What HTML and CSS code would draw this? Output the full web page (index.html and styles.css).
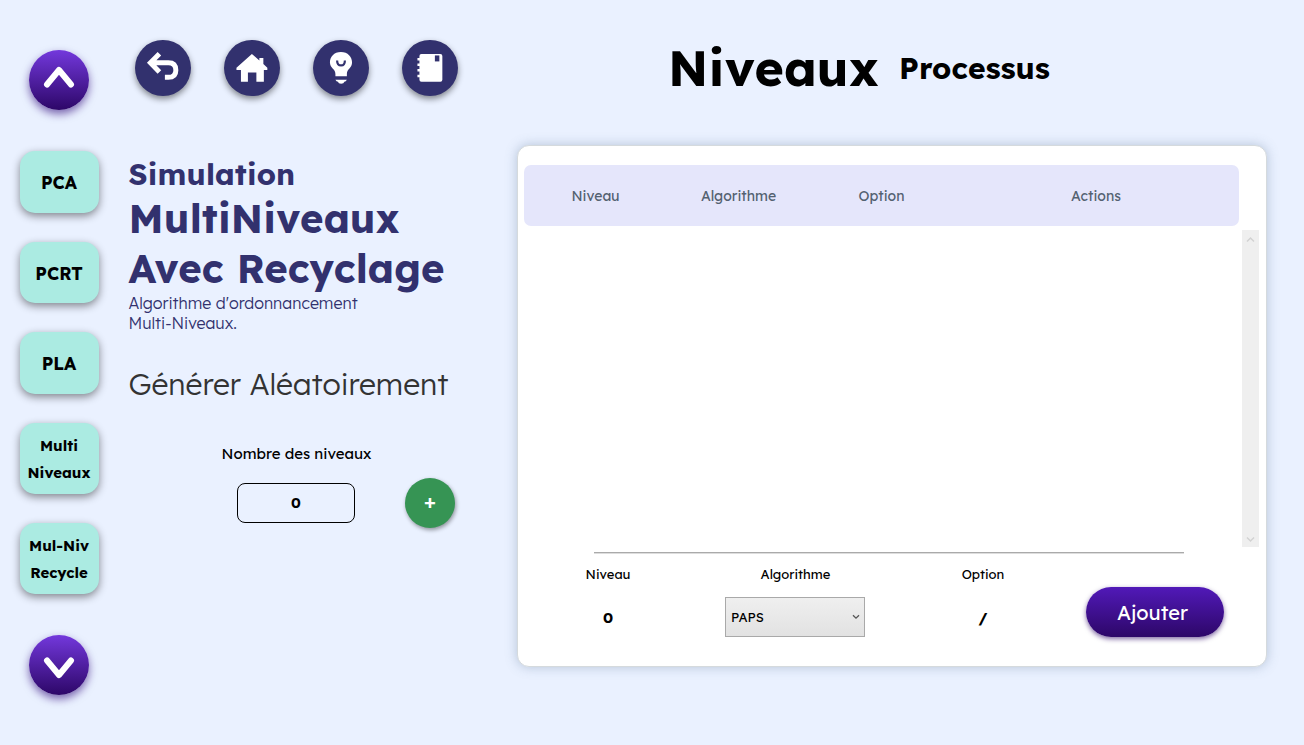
FILE: index.html
```html
<!DOCTYPE html>
<html lang="fr">
<head>
<meta charset="utf-8">
<title>Simulation MultiNiveaux</title>
<link rel="stylesheet" href="styles.css">
</head>
<body>
<div class="app">
  <nav class="sidebar">
    <button class="arrow"><svg viewBox="0 0 60 60"><path d="M18 34.500L30 20L42 34.500"/></svg></button>
    <div class="links">
      <a class="link">PCA</a>
      <a class="link">PCRT</a>
      <a class="link">PLA</a>
      <a class="link tall"><span>Multi</span><span>Niveaux</span></a>
      <a class="link tall"><span>Mul-Niv</span><span>Recycle</span></a>
    </div>
    <button class="arrow"><svg viewBox="0 0 60 60"><path d="M18 25.500L30 40L42 25.500"/></svg></button>
  </nav>

  <section class="intro">
    <div class="tools">
      <button class="tool"><svg viewBox="0 0 56 56"><path class="line" d="M24.500 13.800L15.500 22.800L24.500 32M15.500 22.800H33.500Q41 22.800 41 30.300Q41 37.500 33.500 37.500H30"/></svg></button>
      <button class="tool"><svg viewBox="0 0 56 56"><path d="M28 14L35.500 20.700V18H39.500V24.200L43.500 27.800V30H40V42H32.500V32.500H24V42H17V30H12.500V27.800Z"/></svg></button>
      <button class="tool"><svg viewBox="0 0 56 56"><path d="M28 12C21 12 17 17 17 22.500C17 28 22.500 29 22.500 34V36.500H34V34C34 29 39.200 28 39.200 22.500C39.200 17 35 12 28 12ZM22.500 40H34Q33 42 31.500 42Q31 44 28.200 44Q25.500 44 25 42Q23.500 42 22.500 40Z"/><path class="smile" d="M24.200 20.500Q24.200 25.500 28.200 25.500Q32 25.500 32 20.500"/></svg></button>
      <button class="tool"><svg viewBox="0 0 56 56"><path d="M19.500 14H38.500Q40.500 14 40.500 16V40Q40.500 42 38.500 42H19.500Q17.500 42 17.500 40V37.500H15.500V35H17.500V31.500H15.500V29H17.500V26H15.500V23.500H17.500V20.500H15.500V18H17.500V16Q17.500 14 19.500 14Z"/><path class="mark" d="M33 15.500H37.500V21.500H33Z"/></svg></button>
    </div>
    <h1 class="title"><span class="kicker">Simulation</span><span>MultiNiveaux</span><span>Avec Recyclage</span></h1>
    <p class="desc">Algorithme d'ordonnancement<br>Multi-Niveaux.</p>
    <h2 class="random">Générer Aléatoirement</h2>
    <div class="generator">
      <div class="count"><label>Nombre des niveaux</label><div class="field">0</div></div>
      <button class="plus">+</button>
    </div>
  </section>

  <main class="work">
    <header class="tabs"><span class="tab-main">Niveaux</span><span class="tab-sub">Processus</span></header>
    <div class="panel">
      <div class="head"><span>Niveau</span><span>Algorithme</span><span>Option</span><span>Actions</span></div>
      <div class="rows">
        <div class="scroll">
          <svg viewBox="0 0 17 17"><path d="M5 11.500L8.500 8L12 11.500"/></svg>
          <svg viewBox="0 0 17 17"><path d="M5 7.500L8.500 11L12 7.500"/></svg>
        </div>
      </div>
      <hr class="rule">
      <div class="form">
        <div class="cell"><span>Niveau</span><b>0</b></div>
        <div class="cell"><span>Algorithme</span><div class="select"><span>PAPS</span><svg viewBox="0 0 8 6"><path d="M1 1.200L4 4.200L7 1.200"/></svg></div></div>
        <div class="cell"><span>Option</span><b>/</b></div>
        <button class="add">Ajouter</button>
      </div>
    </div>
  </main>
</div>
</body>
</html>
```
FILE: styles.css
```css
* { box-sizing: border-box; }
body {
  margin: 0;
  background: #eaf1ff;
  color: #000;
  font-family: Lexend, Inter, "Open Sans", sans-serif;
}
button { border: 0; padding: 0; font-family: inherit; }
.app { display: flex; width: 1304px; height: 745px; overflow: hidden; }

.sidebar { width: 118px; padding-top: 50px; display: flex; flex-direction: column; align-items: center; }
.arrow {
  width: 60px; height: 60px; border-radius: 50%; flex: none;
  background: linear-gradient(#7338dc, #2d0768);
  box-shadow: 0 4px 8px rgba(45, 7, 120, .6);
}
.arrow svg { display: block; width: 60px; height: 60px; fill: none; stroke: #fff; stroke-width: 6; stroke-linecap: round; stroke-linejoin: round; }
.links { display: flex; flex-direction: column; gap: 29px; margin: 41px 0 41px; }
.link {
  width: 79px; height: 61.600px; padding-top: 1.500px; border-radius: 15px;
  display: flex; flex-direction: column; align-items: center; justify-content: center;
  background: #abebe2; box-shadow: 0 3px 8px rgba(0, 0, 0, .45);
  font-size: 17.600px; font-weight: 700; line-height: 27px;
}
.tall { height: 71px; font-size: 15px; }

.intro { width: 399px; padding: 40px 0 0 10.500px; }
.tools { display: flex; gap: 33.200px; padding-left: 6.500px; }
.tool { width: 55.800px; height: 55.800px; border-radius: 50%; background: #32316e; box-shadow: 0 3px 6px rgba(0, 0, 0, .45); }
.tool svg { display: block; width: 55.800px; height: 55.800px; fill: #fff; }
.tool .line { fill: none; stroke: #fff; stroke-width: 5; }
.tool .smile { fill: none; stroke: #32316e; stroke-width: 2.200; }
.tool .mark { fill: #32316e; }
.title { margin: 59.200px 0 0; color: #32316e; font-weight: 700; letter-spacing: .17px; white-space: nowrap; }
.title span { display: block; line-height: 50px; font-size: 40px; }
.title .kicker { font-size: 30px; line-height: 38px; }
.desc { margin: 0; color: #32316e; font-size: 16px; font-weight: 300; line-height: 20px; }
.random { margin: 31px 0 0; color: #333; font-size: 30px; line-height: 40px; font-weight: 300; white-space: nowrap; }
.generator { display: flex; align-items: flex-end; padding: 40px 0 0 93px; }
.count { width: 150px; display: flex; flex-direction: column; align-items: center; }
.count label { font-size: 15px; line-height: 20px; white-space: nowrap; }
.field { width: 118px; height: 40px; margin: 19px 1px 0 0; border: 1px solid #000; border-radius: 8px; font-size: 14.500px; font-weight: 700; line-height: 38px; text-align: center; }
.plus { width: 50px; height: 50px; margin: 0 0 -5px 33.500px; padding-bottom: 2px; border-radius: 50%; background: #369454; color: #fff; font-size: 20px; font-weight: 500; box-shadow: 1px 2px 4px rgba(0, 0, 0, .4); }

.work { width: 750px; }
.tabs { height: 145px; padding: 38px 0 0 151px; display: flex; align-items: flex-start; font-weight: 700; line-height: 60px; }
.tab-main { width: 231px; font-size: 50px; letter-spacing: .2px; }
.tab-sub { font-size: 30px; line-height: 61px; letter-spacing: .13px; }
.panel { height: 522px; padding: 19px 7px 0 6px; background: #fff; border: 1px solid #d5dadd; border-radius: 12px; box-shadow: 0 0 12px rgba(80, 110, 140, .35); }
.head { width: 715px; height: 60.500px; display: grid; grid-template-columns: 143px 143px 143px 286px; align-items: center; padding-top: 1px; text-align: center; background: #e5e6fb; border-radius: 7px; color: #536170; font-size: 14px; }
.rows { height: 321.500px; padding-top: 4.500px; display: flex; justify-content: flex-end; }
.scroll { width: 17px; height: 317px; background: #efefef; display: flex; flex-direction: column; justify-content: space-between; }
.scroll svg { width: 17px; height: 17px; fill: none; stroke: #d2d2d2; stroke-width: 1.500; }
.rule { width: 590px; margin: 5px 0 0 70px; border: 0; border-top: 1px solid #aaa; border-bottom: 1px solid #ddd; }
.form { display: grid; grid-template-columns: 188px 187px 188px 138px; margin-left: -10px; }
.cell { display: flex; flex-direction: column; align-items: center; padding-top: 10px; font-size: 13px; line-height: 20px; }
.cell b { margin-top: 14px; font-size: 15px; line-height: 40px; }
.select { width: 140px; height: 40px; margin: 13px 1px 0 0; padding: 0 4px 0 5px; display: flex; align-items: center; justify-content: space-between; border: 1px solid #a9a9a9; background: linear-gradient(#efefef, #e2e2e2); }
.select svg { width: 8px; height: 6px; fill: none; stroke: #555; stroke-width: 1.300; }
.add { width: 138px; height: 50px; margin: 33px 0 0 8.500px; padding-right: 4px; border-radius: 25px; background: linear-gradient(#5119b8, #2d0768); box-shadow: 0 2px 5px rgba(45, 7, 104, .6); color: #fff; font-size: 20px; font-weight: 400; }
```
